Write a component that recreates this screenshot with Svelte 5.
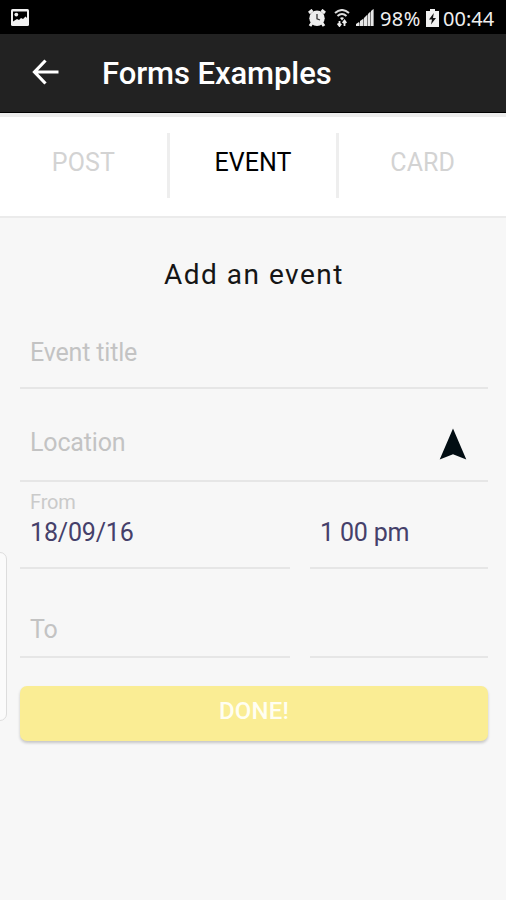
<script>
  const tabs = ['POST', 'EVENT', 'CARD'];
  let active = $state('EVENT');
</script>

<div class="screen">
  <div class="status">
    <svg class="picture" width="18" height="17" viewBox="0 0 18 17">
      <rect width="18" height="17" rx="1.5" fill="#f1f1f1" />
      <path d="M2 2.5H16V9L14.5 7.5L12 10L10 9L8 11L6 10L2 12.5Z" fill="#000" />
      <circle cx="5.3" cy="5.6" r="1.9" fill="#f1f1f1" />
    </svg>
    <div class="indicators">
      <svg class="alarm" width="18" height="18" viewBox="0 0 18 18">
        <path d="M1 4L4.5 1M17 4L13.5 1M4 14L2 17M14 14L16 17" stroke="#eee" stroke-width="3" fill="none" />
        <circle cx="9" cy="9.3" r="7.7" fill="#eee" />
        <path d="M9 5V9.8L12 11" stroke="#333" stroke-width="1.3" fill="none" />
      </svg>
      <svg class="wifi" width="16" height="18" viewBox="0 0 16 18">
        <path d="M1 4Q8 -2 15 4M3.5 7Q8 3 12.5 7" stroke="#ddd" stroke-width="2" fill="none" />
        <path d="M6 9Q8 7.5 10 9L8 11.5Z" fill="#eee" />
        <path d="M5.5 17V12M3.6 14.5L5.5 17L7.2 14.8M10.5 12V17M8.7 14L10.5 11.5L12.3 14" stroke="#eee" stroke-width="1.8" fill="none" />
      </svg>
      <svg class="signal" width="18" height="17" viewBox="0 0 18 17">
        <path d="M0 17L17.5 0V17Z" fill="#777" />
        <path d="M0 17V15L3 13V17ZM4 17V12L7 10V17ZM8 17V9L11 6V17ZM12 17V5L14 3V17ZM15 17V2L17.5 0V17Z" fill="#e8e8e8" />
      </svg>
      <span class="percent">98%</span>
      <svg class="battery" width="13" height="18" viewBox="0 0 13 18">
        <path d="M4 0H9V2H13V18H0V2H4Z" fill="#f1f1f1" />
        <path d="M7.8 4L3 10.5H6L5 15.5L10 9H7Z" fill="#111" />
      </svg>
      <span class="clock">00:44</span>
    </div>
  </div>

  <header>
    <svg width="28" height="26" viewBox="0 0 28 26" fill="none" stroke="#fff" stroke-width="3.2">
      <path d="M14.5 1.5L3.5 13L14.5 24.5M3.5 13H27.5" />
    </svg>
    <h1>Forms Examples</h1>
  </header>

  <nav>
    {#each tabs as tab}
      <button class="tab" class:active={active === tab} onclick={() => (active = tab)}>{tab}</button>
    {/each}
  </nav>

  <main>
    <h2>Add an event</h2>
    <div class="field title"><span>Event title</span></div>
    <div class="field location">
      <span>Location</span>
      <svg width="28" height="32" viewBox="0 0 28 32">
        <path d="M14 0.5L27.3 31.5L14 26.2L0.7 31.5Z" fill="#020d13" />
      </svg>
    </div>
    <div class="row from">
      <div class="field date">
        <small>From</small>
        <span class="value">18/09/16</span>
      </div>
      <div class="field time"><span class="value hour">1 00 pm</span></div>
    </div>
    <div class="row to">
      <div class="field date"><span>To</span></div>
      <div class="field time"></div>
    </div>
    <button class="done">DONE!</button>
  </main>
  <div class="edge-handle"></div>
</div>

<style>
  :global(body) { margin: 0; }
  .screen {
    position: relative;
    box-sizing: border-box;
    width: 506px;
    height: 900px;
    overflow: hidden;
    background: #f7f7f7;
    font-family: Roboto, "Liberation Sans", sans-serif;
  }
  svg { display: block; flex: none; }
  .status {
    height: 34px;
    box-sizing: border-box;
    padding: 0 10px 0 11px;
    background: #000;
    display: flex;
    justify-content: space-between;
    align-items: flex-start;
  }
  .picture { margin-top: 9px; }
  .indicators {
    display: flex;
    color: #efefef;
    font: 20px/24px "Noto Sans", sans-serif;
  }
  .indicators svg { margin-top: 9px; }
  .indicators span { margin-top: 7px; white-space: nowrap; }
  .wifi { margin-left: 8px; }
  .signal { margin-left: 6px; }
  .percent { width: 42px; margin-left: 6px; letter-spacing: 0.4px; }
  .battery { margin-left: 4px; }
  .clock { width: 53px; margin-left: 4px; }
  header {
    height: 79px;
    box-sizing: border-box;
    padding-left: 31px;
    border-bottom: 1px solid #000;
    background: #222;
    display: flex;
    align-items: center;
  }
  header svg { margin-bottom: 2px; }
  h1 {
    margin: 2px 0 0 43px;
    font-size: 31px;
    line-height: 36px;
    font-weight: 500;
    letter-spacing: -0.08px;
    color: #fff;
    white-space: nowrap;
  }
  nav {
    height: 105px;
    box-sizing: border-box;
    padding-top: 16px;
    background: #fff;
    border-top: 4px solid #ececec;
    border-bottom: 2px solid #ebebeb;
    display: flex;
    align-items: flex-start;
  }
  button { border: 0; padding: 0; font-family: inherit; }
  .tab {
    flex: 1;
    height: 65px;
    padding-bottom: 7px;
    background: none;
    color: #d3d3d3;
    font-size: 25px;
    letter-spacing: 0.1px;
  }
  .tab + .tab { border-left: 3px solid #eee; }
  .tab.active { color: #000; }
  main { padding: 0 18px 0 20px; }
  h2 {
    margin: 0;
    padding: 40px 0 27px;
    font-size: 28px;
    line-height: 34px;
    font-weight: 400;
    letter-spacing: 1.5px;
    text-align: center;
    color: #151515;
  }
  .field {
    box-sizing: border-box;
    padding: 0 21px 0 10px;
    border-bottom: 2px solid #e6e6e6;
    font-size: 25px;
    letter-spacing: -0.17px;
    line-height: 30px;
    color: #c3c3c3;
  }
  .title { height: 70px; padding-top: 19px; }
  .location {
    height: 93px;
    padding-top: 39px;
    display: flex;
    justify-content: space-between;
  }
  .row { display: flex; gap: 20px; }
  .date { width: 270px; }
  .time { flex: 1; }
  .from .field { height: 87px; padding-top: 9px; }
  small { display: block; font-size: 20px; line-height: 22px; color: #cacaca; }
  .value { display: block; margin-top: 5px; color: #45406a; white-space: nowrap; }
  .hour { margin-top: 27px; }
  .to .field { height: 89px; padding-top: 46px; }
  .done {
    display: block;
    width: 100%;
    height: 55px;
    margin-top: 28px;
    padding-bottom: 5px;
    border-radius: 7px;
    background: #faed94;
    box-shadow: 0 2px 3px #0003;
    color: #fffef2;
    font-size: 24px;
    font-weight: 500;
    letter-spacing: 0.2px;
  }
  .edge-handle {
    position: absolute;
    left: -11px;
    top: 552px;
    width: 16px;
    height: 167px;
    border: 1px solid #ddd;
    border-radius: 7px;
    background: #fbfbfb;
  }
</style>
